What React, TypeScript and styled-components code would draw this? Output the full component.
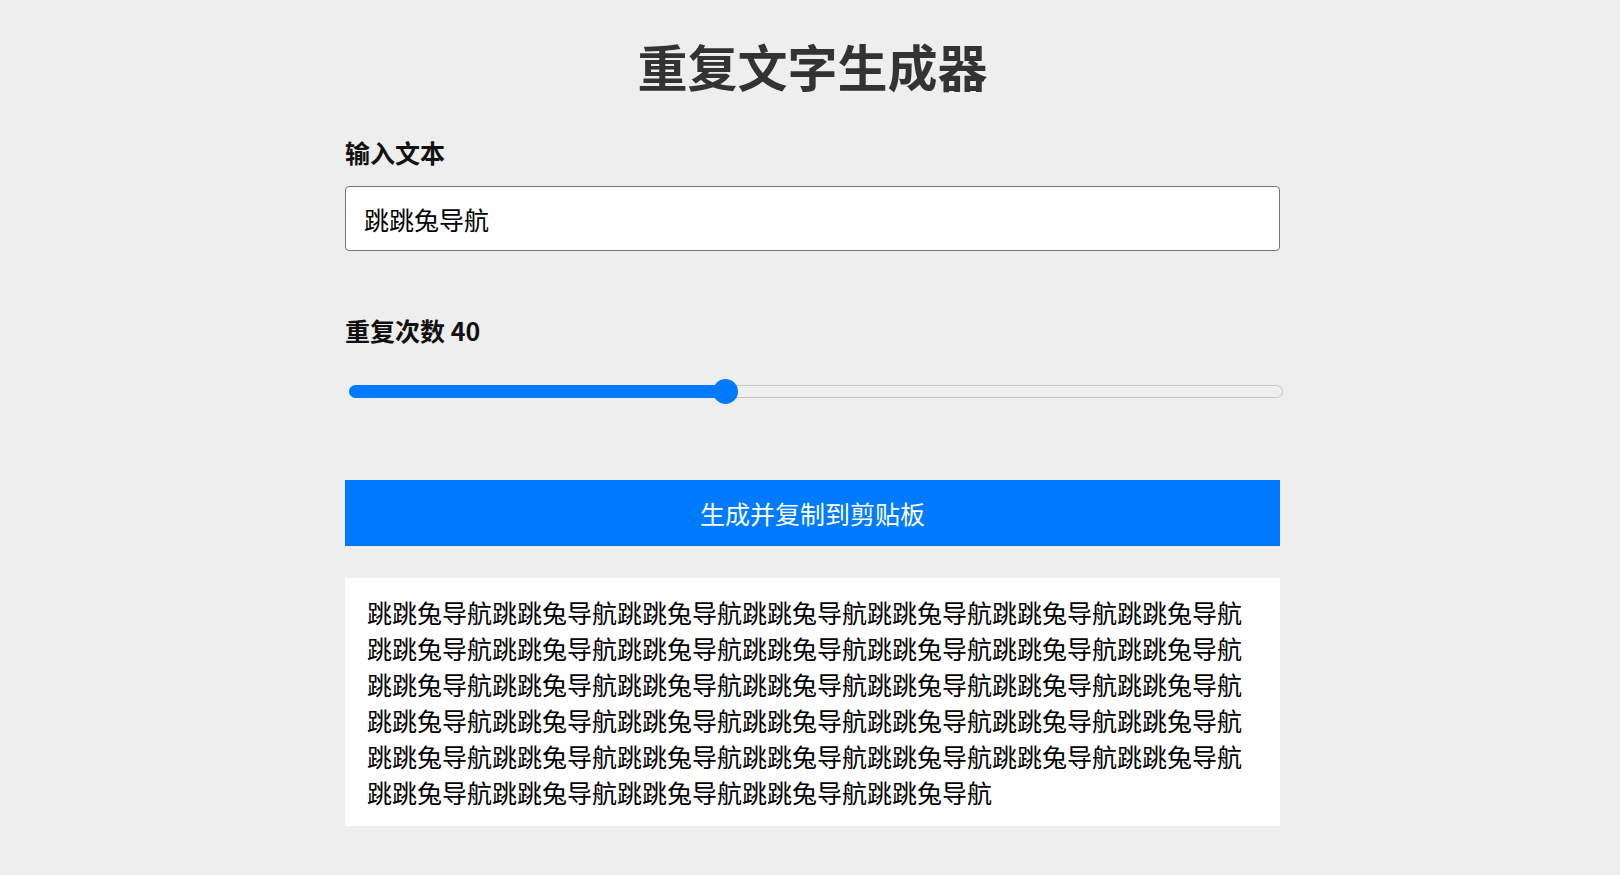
import { useState } from "react";
import styled, { createGlobalStyle } from "styled-components";

const GlobalStyle = createGlobalStyle`
  * {
    box-sizing: border-box;
  }
  html, body {
    margin: 0;
    padding: 0;
    background: #eeeeee;
  }
  body {
    font-family: "Noto Sans CJK SC", "Noto Sans", sans-serif;
    color: #000;
  }
`;

const MIN = 0;
const MAX = 100;

export default function App() {
  const [text, setText] = useState("跳跳兔导航");
  const [count, setCount] = useState(40);
  const [output, setOutput] = useState("跳跳兔导航".repeat(40));

  const handleGenerate = () => {
    const result = text.repeat(count);
    setOutput(result);
    try {
      navigator.clipboard?.writeText(result).catch(() => {});
    } catch {
      // ignore
    }
  };

  const frac = (count - MIN) / (MAX - MIN);

  return (
    <>
      <GlobalStyle />
      <Page>
        <Title>重复文字生成器</Title>

        <Label htmlFor="source">输入文本</Label>
        <TextInput
          id="source"
          value={text}
          onChange={(e) => setText(e.target.value)}
        />

        <Label htmlFor="count" $gap={61}>
          重复次数 {count}
        </Label>
        <SliderWrap>
          <Track>
            <Fill style={{ width: `calc(12.5px + ${frac} * (100% - 25px))` }} />
          </Track>
          <Range
            id="count"
            type="range"
            min={MIN}
            max={MAX}
            value={count}
            onChange={(e) => setCount(Number(e.target.value))}
          />
        </SliderWrap>

        <GenerateButton onClick={handleGenerate}>生成并复制到剪贴板</GenerateButton>

        <Output>{output}</Output>
      </Page>
    </>
  );
}

const Page = styled.div`
  width: 935px;
  margin-left: calc(50% - 465px);
  padding: 29px 0 40px;
  display: flex;
  flex-direction: column;
`;

const Title = styled.h1`
  margin: 0;
  font-size: 50px;
  line-height: 72px;
  font-weight: 700;
  color: #333;
  text-align: center;
`;

const Label = styled.label<{ $gap?: number }>`
  display: block;
  margin-top: ${(p) => p.$gap ?? 33}px;
  font-size: 25px;
  line-height: 36px;
  font-weight: 700;
  color: #111;
`;

const TextInput = styled.input`
  margin-top: 16px;
  width: 100%;
  height: 65px;
  padding: 0 18px;
  border: 1px solid #767676;
  border-radius: 4px;
  background: #fff;
  font-family: "Noto Sans CJK SC", "Noto Sans", sans-serif;
  font-size: 25px;
  color: #000;
  outline: none;
`;

const SliderWrap = styled.div`
  position: relative;
  margin: 31px -3px 0 4px;
  height: 25px;
  display: flex;
  align-items: center;
`;

const Track = styled.div`
  position: relative;
  width: 100%;
  height: 13px;
  border: 1px solid #c5c5c5;
  border-radius: 7px;
  background: #efefef;
`;

const Fill = styled.div`
  position: absolute;
  left: -1px;
  top: -1px;
  bottom: -1px;
  border-radius: 7px;
  background: #007bff;
`;

const Range = styled.input`
  position: absolute;
  inset: 0;
  width: 100%;
  height: 25px;
  margin: 0;
  background: transparent;
  -webkit-appearance: none;
  appearance: none;
  cursor: pointer;

  &::-webkit-slider-runnable-track {
    height: 25px;
    background: transparent;
  }

  &::-webkit-slider-thumb {
    -webkit-appearance: none;
    width: 25px;
    height: 25px;
    border: none;
    border-radius: 50%;
    background: #007bff;
  }

  &::-moz-range-thumb {
    width: 25px;
    height: 25px;
    border: none;
    border-radius: 50%;
    background: #007bff;
  }
`;

const GenerateButton = styled.button`
  margin-top: 76px;
  width: 100%;
  height: 66px;
  border: none;
  border-bottom: 1px solid #0a6fe0;
  background: #007bff;
  color: #fff;
  font-family: "Noto Sans CJK SC", "Noto Sans", sans-serif;
  font-size: 25px;
  font-weight: 400;
  cursor: pointer;
`;

const Output = styled.div`
  margin-top: 32px;
  padding: 16px 22px;
  background: #fff;
  font-size: 25px;
  color: #000;
  word-break: break-all;
  white-space: pre-wrap;
`;
